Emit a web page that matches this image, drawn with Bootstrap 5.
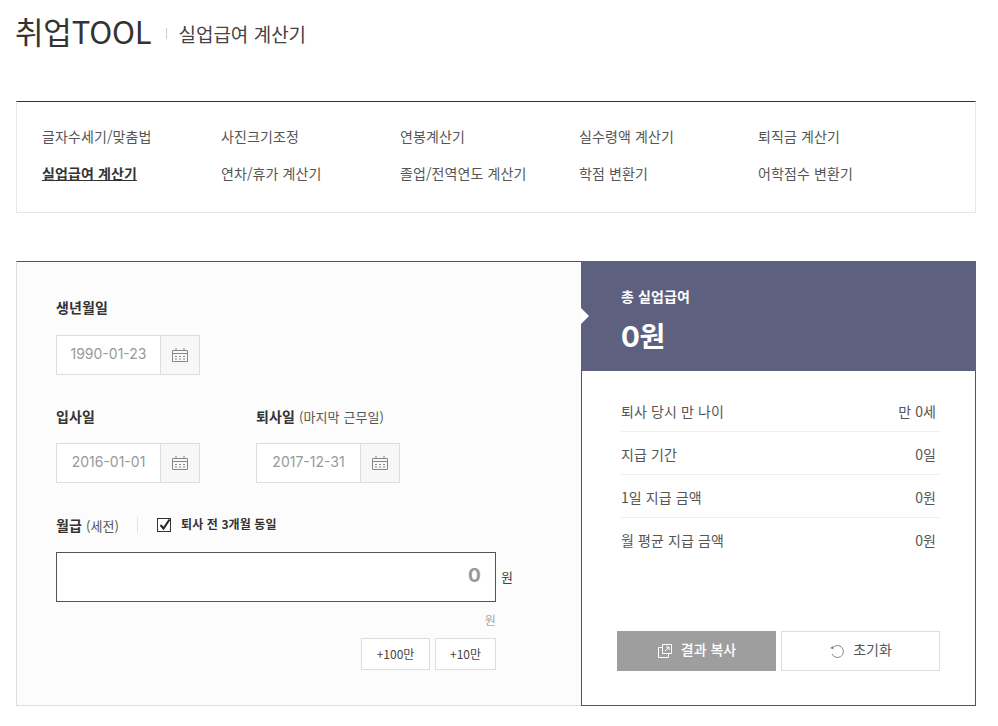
<!DOCTYPE html>
<html lang="ko">
<head>
<meta charset="utf-8">
<title>실업급여 계산기</title>
<link href="https://cdn.jsdelivr.net/npm/bootstrap@5.3.0/dist/css/bootstrap.min.css" rel="stylesheet">
<style>
body{font-family:"Noto Sans CJK KR","Noto Sans",sans-serif;color:#333;background:#fff;font-size:14px;letter-spacing:.1px}
.page-wrap{padding:0 22px 0 16px;width:998px}
.head-bar{height:101px;padding-top:10px;align-items:flex-start}
.brand-name{font-size:31px;line-height:42px;font-weight:400;color:#333;margin:0;letter-spacing:-.2px;margin-left:-1px}
.brand-sep{width:1px;height:11px;background:#ccc;margin:18px 11px 0 15px}
.brand-sub{font-size:19px;line-height:46px;color:#444;letter-spacing:0;margin-top:1px}
.menu-box{height:112px;border:1px solid #e6e6e6;border-top-color:#333;padding:16px 25px;margin-bottom:48px;display:grid;grid-template-columns:repeat(5,179px);grid-auto-rows:37px;align-items:center}
.menu-link{color:#555;text-decoration:none;font-size:14px}
.menu-link.is-on{color:#333;font-weight:700;text-decoration:underline}
.calc-box{height:445px}
.calc-left{width:565px;background:#fcfcfc;border:1px solid #ddd;border-top-color:#555;border-right:0;padding:35px 39px 0}
.calc-right{width:395px;border:1px solid #555;border-top:0;position:relative;background:#fff;display:flex;flex-direction:column}
.total-head{height:110px;margin:0 -1px;background:#5d617f;color:#fff;padding:24px 40px 0;position:relative}
.total-head::before{content:"";position:absolute;left:0;top:47px;border:8px solid transparent;border-left-color:#fff;border-right:0}
.total-lbl{font-size:14px;font-weight:700;line-height:22px}
.total-num{font-size:28px;font-weight:700;line-height:38px;margin-top:11px;font-family:Inter,"Noto Sans CJK KR",sans-serif;letter-spacing:-.3px}
.fld-lbl{font-size:14px;font-weight:700;line-height:20px;color:#333;margin-bottom:17px;height:20px}
.lbl-first{margin-bottom:18px}
.fld-lbl span{font-weight:400;font-size:13px;color:#555}
.date-box{width:144px;height:40px;border:1px solid #ddd;display:flex;background:#fff}
.date-val{flex:1;text-align:center;color:#999;font-family:Inter,"Noto Sans CJK KR",sans-serif;font-size:14px;line-height:36px;letter-spacing:0}
.date-btn{width:39px;background:#f7f7f7;border-left:1px solid #ddd;display:flex;align-items:center;justify-content:center}
.fld-row{margin-bottom:31px}
.fld-row-b{margin-bottom:32px}
.date-col{width:200px}
.pay-head{height:20px;margin-bottom:17px}
.pay-head .fld-lbl{margin:0}
.pay-sep{width:1px;height:16px;background:#e3e3e3;margin:0 18px}
.chk-box{width:14px;height:14px;border:1px solid #333;background:#fff;margin-right:10px;margin-left:1px;position:relative;display:block}
.chk-box svg{position:absolute;left:0;top:-2px}
.chk-txt{font-size:12px;font-weight:700;color:#333;line-height:20px;margin-top:-3px;letter-spacing:.1px}
.pay-input{width:440px;height:50px;border:1px solid #555;background:#fff;text-align:right;padding-right:14px;line-height:46px;font-size:19px;font-weight:700;color:#999;font-family:Inter,"Noto Sans CJK KR",sans-serif}
.pay-unit{font-size:13px;color:#444;margin-left:5px}
.pay-hint{width:440px;text-align:right;font-size:12px;color:#aaa;line-height:18px;margin-top:9px}
.add-row{width:440px;margin-top:9px;gap:5px}
.add-btn{height:32px;background:#fff;border:1px solid #ddd;border-radius:0;font-size:12px;color:#444;padding:0;line-height:28px;--bs-btn-border-radius:0}
.add-a{width:69px}.add-b{width:61px}
.res-list{padding:18px 35px 0 39px;margin:0;list-style:none}
.res-item{height:43px;display:flex;justify-content:space-between;align-items:center;border-bottom:1px solid #efefef;font-size:14px;color:#555;padding-right:4px;padding-top:2px}
.res-item:last-child{border-bottom:0}
.act-row{margin-top:auto;padding:0 35px 34px;gap:5px}
.act-btn{height:40px;border-radius:0;font-size:14px;display:flex;align-items:center;justify-content:center;gap:8px;padding:0 0 4px;flex:1}
.act-btn svg{margin-top:4px}
.act-copy{background:#9e9e9e;border:1px solid #9e9e9e;color:#fff;font-weight:500}
.act-reset{background:#fff;border:1px solid #ddd;color:#555}
</style>
</head>
<body>
<div class="page-wrap">
  <header class="head-bar d-flex">
    <h1 class="brand-name">취업TOOL</h1>
    <i class="brand-sep"></i>
    <div class="brand-sub">실업급여 계산기</div>
  </header>
  <nav class="menu-box">
    <a class="menu-link" href="#">글자수세기/맞춤법</a>
    <a class="menu-link" href="#">사진크기조정</a>
    <a class="menu-link" href="#">연봉계산기</a>
    <a class="menu-link" href="#">실수령액 계산기</a>
    <a class="menu-link" href="#">퇴직금 계산기</a>
    <a class="menu-link is-on" href="#">실업급여 계산기</a>
    <a class="menu-link" href="#">연차/휴가 계산기</a>
    <a class="menu-link" href="#">졸업/전역연도 계산기</a>
    <a class="menu-link" href="#">학점 변환기</a>
    <a class="menu-link" href="#">어학점수 변환기</a>
  </nav>
  <main class="calc-box d-flex">
    <section class="calc-left">
      <div class="fld-row">
        <div class="fld-lbl lbl-first">생년월일</div>
        <div class="date-box"><div class="date-val">1990-01-23</div><div class="date-btn"><svg width="18" height="16" viewBox="0 0 18 16" fill="none" stroke="#888"><path d="M1.5 3.5h15v11h-15zM1.5 6.500h15M5 1v3M13 1v3"/><path d="M4 9.500h2M8 9.500h2M12 9.500h2M4 12h2M8 12h2M12 12h2"/></svg></div></div>
      </div>
      <div class="fld-row-b d-flex">
        <div class="date-col">
          <div class="fld-lbl">입사일</div>
          <div class="date-box"><div class="date-val">2016-01-01</div><div class="date-btn"><svg width="18" height="16" viewBox="0 0 18 16" fill="none" stroke="#888"><path d="M1.5 3.5h15v11h-15zM1.5 6.500h15M5 1v3M13 1v3"/><path d="M4 9.500h2M8 9.500h2M12 9.500h2M4 12h2M8 12h2M12 12h2"/></svg></div></div>
        </div>
        <div class="date-col">
          <div class="fld-lbl">퇴사일 <span>(마지막 근무일)</span></div>
          <div class="date-box"><div class="date-val">2017-12-31</div><div class="date-btn"><svg width="18" height="16" viewBox="0 0 18 16" fill="none" stroke="#888"><path d="M1.5 3.5h15v11h-15zM1.5 6.500h15M5 1v3M13 1v3"/><path d="M4 9.500h2M8 9.500h2M12 9.500h2M4 12h2M8 12h2M12 12h2"/></svg></div></div>
        </div>
      </div>
      <div class="pay-head d-flex align-items-center">
        <div class="fld-lbl">월급 <span>(세전)</span></div>
        <i class="pay-sep"></i>
        <i class="chk-box"><svg width="14" height="15" viewBox="0 0 14 15" fill="none" stroke="#222" stroke-width="2"><path d="M2.500 8l3 3.500 6-9"/></svg></i>
        <div class="chk-txt">퇴사 전 3개월 동일</div>
      </div>
      <div class="d-flex align-items-center">
        <div class="pay-input">0</div>
        <div class="pay-unit">원</div>
      </div>
      <div class="pay-hint">원</div>
      <div class="add-row d-flex justify-content-end">
        <button class="btn add-btn add-a" type="button">+100만</button>
        <button class="btn add-btn add-b" type="button">+10만</button>
      </div>
    </section>
    <section class="calc-right">
      <div class="total-head">
        <div class="total-lbl">총 실업급여</div>
        <div class="total-num">0원</div>
      </div>
      <ul class="res-list">
        <li class="res-item"><span>퇴사 당시 만 나이</span><span>만 0세</span></li>
        <li class="res-item"><span>지급 기간</span><span>0일</span></li>
        <li class="res-item"><span>1일 지급 금액</span><span>0원</span></li>
        <li class="res-item"><span>월 평균 지급 금액</span><span>0원</span></li>
      </ul>
      <div class="act-row d-flex">
        <button class="btn act-btn act-copy" type="button"><svg width="16" height="16" viewBox="0 0 16 16" fill="none" stroke="#fff"><path d="M5.500 4.500h-4v10h10v-4M5.500 1.500h9v9h-9zM8 8l4-4M9 4h3v3"/></svg>결과 복사</button>
        <button class="btn act-btn act-reset" type="button"><svg width="16" height="16" viewBox="0 0 16 16" fill="none" stroke="#888"><path d="M4 4.500a6 6 0 1 1-1 6.500"/><path d="M1 5l3-2 .5 3.500z" fill="#888" stroke="none"/></svg>초기화</button>
      </div>
    </section>
  </main>
</div>
</body>
</html>
